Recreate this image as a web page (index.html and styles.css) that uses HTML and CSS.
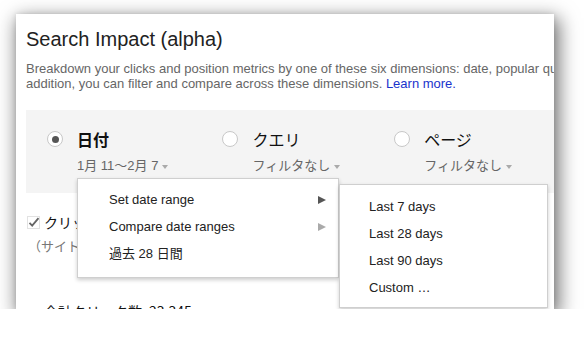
FILE: index.html
```html
<!DOCTYPE html>
<html lang="ja">
<head>
<meta charset="utf-8">
<link rel="stylesheet" href="styles.css">
</head>
<body>
<div class="window">
  <h1 class="title">Search Impact (alpha)</h1>
  <p class="desc">Breakdown your clicks and position metrics by one of these six dimensions: date, popular queries, pages, countries, devices, or search type. In<br>addition, you can filter and compare across these dimensions. <a class="link" href="#">Learn more.</a></p>

  <div class="panel">
    <div class="dim">
      <span class="radio checked"></span>
      <div class="dim-text">
        <div class="dim-name bold">日付</div>
        <div class="dim-filter">1月 11〜2月 7 <span class="caret"></span></div>
      </div>
    </div>
    <div class="dim">
      <span class="radio"></span>
      <div class="dim-text">
        <div class="dim-name">クエリ</div>
        <div class="dim-filter">フィルタなし <span class="caret"></span></div>
      </div>
    </div>
    <div class="dim">
      <span class="radio"></span>
      <div class="dim-text">
        <div class="dim-name">ページ</div>
        <div class="dim-filter">フィルタなし <span class="caret"></span></div>
      </div>
    </div>
  </div>

  <div class="metric">
    <span class="checkbox"><svg width="13" height="13" viewBox="0 0 13 13"><path d="M2.5 6.8 L5.2 9.6 L11.5 2.2" fill="none" stroke="#666" stroke-width="1.8"/></svg></span>
    <span class="metric-name">クリック数</span>
  </div>
  <div class="metric-sub">（サイト別）</div>
  <div class="total">合計クリック数: 23,345</div>

  <div class="menu menu-main">
    <div class="item"><span>Set date range</span><span class="arrow dark"></span></div>
    <div class="item"><span>Compare date ranges</span><span class="arrow light"></span></div>
    <div class="item"><span>過去 28 日間</span></div>
  </div>
  <div class="menu menu-sub">
    <div class="item">Last 7 days</div>
    <div class="item">Last 28 days</div>
    <div class="item">Last 90 days</div>
    <div class="item">Custom …</div>
  </div>
</div>
</body>
</html>
```

FILE: styles.css
```css
html, body {
  margin: 0;
  background: #fff;
}
body {
  padding: 14px 0 0 16px;
  font-family: "Liberation Sans", Arial, "Noto Sans CJK JP", sans-serif;
  color: #222;
}
.window {
  position: relative;
  width: 538px;
  height: 295px;
  background: #fff;
  overflow: hidden;
  box-shadow: 3px 6px 18px 2px rgba(0, 0, 0, 0.55), 0 0 5px rgba(0, 0, 0, 0.1);
  padding-left: 10px;
  box-sizing: border-box;
}
.title {
  margin: 0;
  padding-top: 13px;
  font-size: 20px;
  line-height: 24px;
  font-weight: normal;
  color: #222;
}
.desc {
  margin: 10px 0 0;
  font-size: 13px;
  line-height: 15px;
  color: #666;
  white-space: nowrap;
}
.link {
  color: #1a33cc;
  text-decoration: none;
}
.panel {
  margin-top: 19px;
  height: 83px;
  box-sizing: border-box;
  background: #f4f4f4;
  padding: 18px 0 0 21px;
  display: flex;
  gap: 54px;
  width: 600px;
}
.dim {
  display: flex;
  gap: 14px;
  align-items: flex-start;
}
.radio {
  margin-top: 3px;
  width: 16px;
  height: 16px;
  box-sizing: border-box;
  border-radius: 50%;
  border: 1px solid #c8c8c8;
  background: #fff;
  display: flex;
  align-items: center;
  justify-content: center;
  flex: none;
}
.radio.checked::after {
  content: "";
  width: 7px;
  height: 7px;
  border-radius: 50%;
  background: #555;
}
.dim-name {
  font-family: "Noto Sans CJK JP", sans-serif;
  font-size: 16px;
  line-height: 22px;
  color: #111;
}
.dim-name.bold {
  font-weight: bold;
}
.dim-filter {
  margin-top: 7px;
  font-family: "Liberation Sans", Arial, "Noto Sans CJK JP", sans-serif;
  font-size: 13px;
  line-height: 18px;
  color: #666;
  white-space: nowrap;
  display: flex;
  align-items: center;
  gap: 2px;
}
.caret {
  width: 0;
  height: 0;
  border-left: 3.5px solid transparent;
  border-right: 3.5px solid transparent;
  border-top: 4px solid #aaa;
  margin-left: 2px;
  margin-top: 1px;
}
.metric {
  margin-top: 19px;
  display: flex;
  align-items: center;
  gap: 4px;
  margin-left: 1px;
  height: 20px;
}
.checkbox {
  width: 13px;
  height: 13px;
  box-sizing: border-box;
  border: 1px solid #e2e2e2;
  display: flex;
  align-items: center;
  justify-content: center;
}
.checkbox svg {
  display: block;
  margin: -1px;
}
.metric-name {
  font-family: "Noto Sans CJK JP", sans-serif;
  font-size: 14px;
  line-height: 20px;
  color: #111;
}
.metric-sub {
  margin-top: 4px;
  margin-left: 2px;
  font-family: "Noto Sans CJK JP", sans-serif;
  font-size: 13px;
  line-height: 20px;
  color: #777;
}
.total {
  margin-top: 45px;
  margin-left: 18px;
  font-family: "Noto Sans CJK JP", sans-serif;
  font-size: 14px;
  line-height: 20px;
  color: #111;
}
.menu {
  position: absolute;
  background: #fff;
  border: 1px solid #cfcfcf;
  box-shadow: 0 2px 4px rgba(0, 0, 0, 0.2);
  box-sizing: border-box;
  font-size: 13px;
  color: #222;
  z-index: 2;
}
.menu .item {
  height: 27px;
  line-height: 27px;
  display: flex;
  align-items: center;
  justify-content: space-between;
  white-space: nowrap;
}
.menu-main {
  left: 61px;
  top: 164px;
  width: 262px;
  padding: 7px 0 10px;
}
.menu-main .item {
  padding: 0 12px 0 31px;
}
.menu-main .item span:first-child {
  font-family: "Liberation Sans", Arial, "Noto Sans CJK JP", sans-serif;
}
.menu-sub {
  left: 323px;
  top: 170px;
  width: 209px;
  padding: 8px 0 6px;
  z-index: 3;
}
.menu-sub .item {
  padding-left: 29px;
}
.arrow {
  width: 0;
  height: 0;
  border-top: 4.5px solid transparent;
  border-bottom: 4.5px solid transparent;
  border-left: 8px solid #555;
}
.arrow.light {
  border-left-color: #aaa;
}
```
